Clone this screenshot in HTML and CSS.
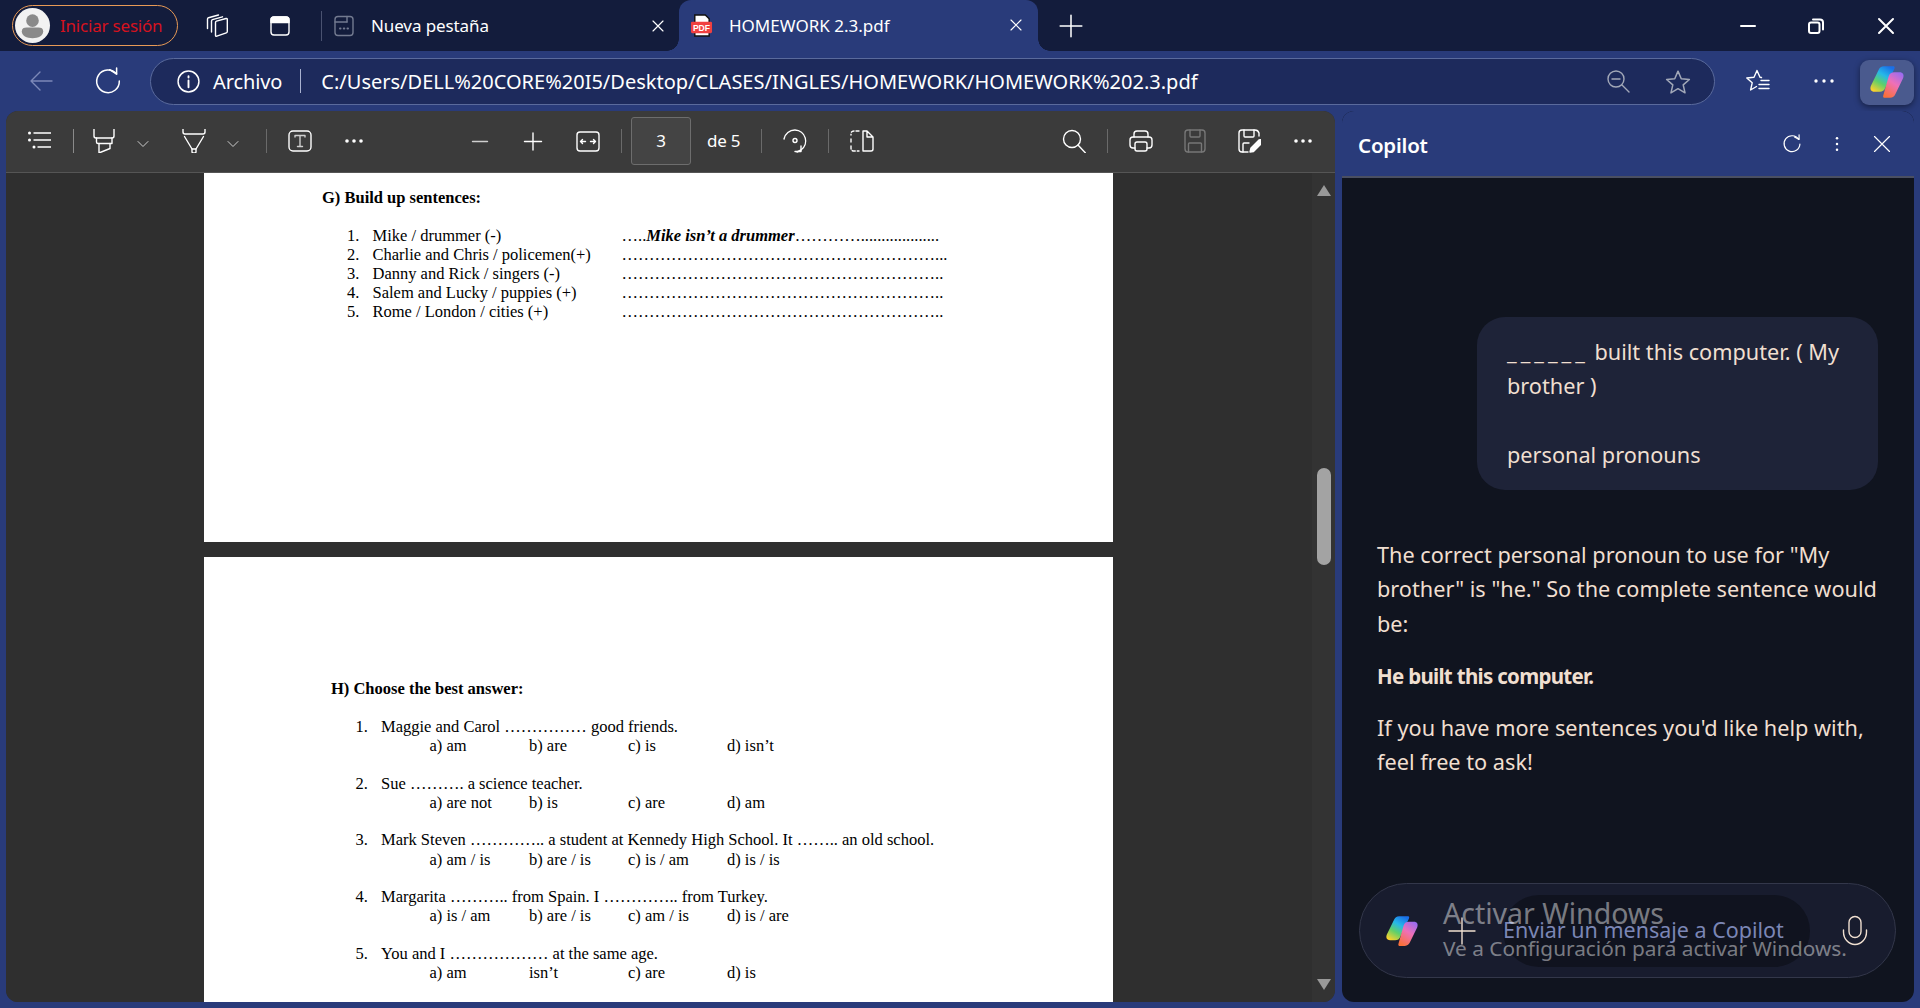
FILE: index.html
```html
<!DOCTYPE html>
<html lang="es">
<head>
<meta charset="utf-8">
<title>HOMEWORK 2.3.pdf</title>
<link rel="stylesheet" href="styles.css">
</head>
<body>
<svg class="defs" width="0" height="0" aria-hidden="true">
  <defs>
    <linearGradient id="cpA" x1="0.75" y1="0" x2="0.2" y2="1">
      <stop offset="0" stop-color="#1a6fe8"/><stop offset="0.35" stop-color="#26b8e8"/><stop offset="0.65" stop-color="#5fd06a"/><stop offset="1" stop-color="#fbd12c"/>
    </linearGradient>
    <linearGradient id="cpB" x1="0.8" y1="0" x2="0.25" y2="1">
      <stop offset="0" stop-color="#9a6cf0"/><stop offset="0.45" stop-color="#ee70b8"/><stop offset="1" stop-color="#f9703a"/>
    </linearGradient>
  </defs>
</svg>
<header class="tabbar">
  <div class="profile">
    <span class="avatar"><svg viewBox="0 0 36 36"><circle cx="18" cy="13" r="6.500" fill="#8a8a8a"/><path d="M7 24c0-3 2-4 5-4h12c3 0 5 1 5 4 0 5-5 7-11 7S7 29 7 24z" fill="#8a8a8a"/></svg></span>
    <span class="profile-label">Iniciar sesión</span>
  </div>
  <span class="btn b-work"><svg class="ic" viewBox="0 0 24 24"><path d="M10.500 8.500q0-1 1-1.300l9.500-2.700q1.300-.3 1.300 1v12q0 1-1 1.300l-9.500 3.400q-1.300.4-1.300-1z"/><path d="M6.500 18V7q0-1 1-1.300L17.500 2.800"/><path d="M2.500 14.500V5q0-1 1-1.300L13.500 1"/></svg></span>
  <span class="btn b-acts"><svg class="ic" viewBox="0 0 24 24"><rect x="3" y="3" width="18" height="18" rx="3"/><path d="M3 8.500h18V6a3 3 0 0 0-3-3H6a3 3 0 0 0-3 3z" fill="currentColor"/></svg></span>
  <span class="tab-sep"></span>
  <div class="tab tab-idle">
    <svg class="ic tab-ic dim" viewBox="0 0 24 24"><rect x="3" y="2.500" width="18" height="19" rx="3"/><path d="M3 8h12"/><path d="M15 2.500V8"/><path d="M8 14.500h.5M11.800 14.500h.5M15.500 14.500h.5" stroke-width="2"/></svg>
    <span class="tab-title">Nueva pestaña</span>
    <svg class="ic tab-x" viewBox="0 0 24 24"><path d="M6 6l12 12M18 6L6 18"/></svg>
  </div>
  <div class="tab tab-active">
    <svg class="tab-pdf" viewBox="0 0 24 24"><path d="M5 1h11l4 4v18H5z" fill="#fff" stroke="#111" stroke-width="1.500"/><rect x="1" y="8" width="22" height="12" rx="1.500" fill="#f04040"/><text x="12" y="17.500" class="pdf-mark">PDF</text></svg>
    <span class="tab-title">HOMEWORK 2.3.pdf</span>
    <svg class="ic tab-x" viewBox="0 0 24 24"><path d="M6 6l12 12M18 6L6 18"/></svg>
  </div>
  <span class="btn b-new"><svg class="ic big" viewBox="0 0 24 24"><path d="M12 2v20M2 12h20"/></svg></span>
  <div class="win">
    <span class="win-btn"><svg class="ic" viewBox="0 0 24 24"><path d="M5 12h14" stroke-width="2"/></svg></span>
    <span class="win-btn b-restore"><svg class="ic" viewBox="0 0 24 24"><rect x="5" y="8.500" width="10.500" height="10.500" rx="2" stroke-width="2"/><path d="M9 5.500h7a3 3 0 0 1 3 3v7" stroke-width="2"/></svg></span>
    <span class="win-btn"><svg class="ic" viewBox="0 0 24 24"><path d="M5 5l14 14M19 5L5 19" stroke-width="2"/></svg></span>
  </div>
</header>

<nav class="addr-row">
  <span class="btn b-back"><svg class="ic big faded" viewBox="0 0 26 26"><path d="M24 13H3M12 4l-9 9 9 9"/></svg></span>
  <span class="btn b-reload"><svg class="ic reload" viewBox="0 0 26 26"><path d="M21 6.500A10.500 10.500 0 1 0 23.500 13"/><path d="M14.500 2.500l6.500 4V1"/></svg></span>
  <div class="omnibox">
    <svg class="ic info" viewBox="0 0 24 24"><circle cx="12" cy="12" r="10"/><path d="M12 11v6.500M12 7v1.200" stroke-width="1.800"/></svg>
    <span class="archivo">Archivo</span>
    <span class="omni-sep"></span>
    <span class="url">C:/Users/DELL%20CORE%20I5/Desktop/CLASES/INGLES/HOMEWORK/HOMEWORK%202.3.pdf</span>
    <svg class="ic omni-zoom" viewBox="0 0 24 24"><circle cx="10" cy="10" r="8"/><path d="M6 10h8M16 16l7 7"/></svg>
    <svg class="ic omni-star" viewBox="0 0 24 24"><path d="M12 2l3 7 7.500.700-5.700 5 1.700 7.300L12 18.200 5.500 22l1.700-7.300-5.700-5L9 9z"/></svg>
  </div>
  <span class="btn b-fav"><svg class="ic" viewBox="0 0 24 24"><path d="M15.500 8.500L14 8.200 11 1.500 8 8.200.8 9l5.400 4.800L4.600 21l5.900-3.500"/><path d="M15 11.500h8M13 15.500h10M13 19.500h10"/></svg></span>
  <span class="btn b-more"><svg class="ic" viewBox="0 0 24 24"><circle cx="4" cy="12" r="1.700" class="dot"/><circle cx="12" cy="12" r="1.700" class="dot"/><circle cx="20" cy="12" r="1.700" class="dot"/></svg></span>
  <span class="copilot-btn"><svg class="logo logo-lg" viewBox="0 0 24 24"><path d="M16.500 1.500H10c-1.800 0-3 1-3.700 2.700L1.300 14.500c-1 2.500.3 4 2.200 4h3.700c1.800 0 3-.8 3.600-2.500L17 3c.3-1-.2-1.500-.5-1.500z" fill="url(#cpA)"/><path d="M10 22.500H14c1.800 0 3-1 3.700-2.700l5-10.300c1-2.500-.3-4-2.200-4h-3.700c-1.800 0-3 .8-3.600 2.500L9.500 21c-.3 1 .2 1.500.5 1.500z" fill="url(#cpB)"/></svg></span>
</nav>

<main class="workspace">
  <section class="viewer">
    <div class="toolbar">
      <span class="tool g17"><svg class="ic" viewBox="0 0 24 24"><path d="M7 4h17M7 11h17M11 18h13"/><circle cx="2.500" cy="4" r="1.500" class="dot"/><circle cx="2.500" cy="11" r="1.500" class="dot"/><circle cx="7" cy="18" r="1.500" class="dot"/></svg></span>
      <span class="tsep g18"></span>
      <span class="tool g14"><svg class="ic" viewBox="0 0 24 24"><path d="M2 0v7q0 2 2 2h16q2 0 2-2V0"/><path d="M4.500 9v4q0 1.500 1.500 1.500h14V9"/><path d="M7 14.500V24l11-4.500v-5"/></svg></span>
      <span class="chev g15"><svg class="ic" viewBox="0 0 16 16"><path d="M3 5.500l5 5 5-5"/></svg></span>
      <span class="tool g27"><svg class="ic" viewBox="0 0 24 24"><path d="M1 0v3q0 2 2 2h18q2 0 2-2V0"/><path d="M2.500 7.500L10 20h4l7.500-12.500"/><path d="M10 20v3q0 1 2 1t2-1v-3"/></svg></span>
      <span class="chev g15"><svg class="ic" viewBox="0 0 16 16"><path d="M3 5.500l5 5 5-5"/></svg></span>
      <span class="tsep dim-sep g25"></span>
      <span class="tool g17"><svg class="ic" viewBox="0 0 24 24"><rect x="1" y="2" width="22" height="20" rx="4"/><path d="M7 8V6.500h10V8M12 6.500v11M9.500 17.500h5" class="grey"/></svg></span>
      <span class="tool g22"><svg class="ic" viewBox="0 0 24 24"><circle cx="5" cy="12" r="1.800" class="dot"/><circle cx="12" cy="12" r="1.800" class="dot"/><circle cx="19" cy="12" r="1.800" class="dot"/></svg></span>
      <span class="tool g94"><svg class="ic" viewBox="0 0 24 24"><path d="M4.500 12.500h15" class="grey"/></svg></span>
      <span class="tool g21"><svg class="ic" viewBox="0 0 24 24"><path d="M12 4v17M3.500 12.500h17"/></svg></span>
      <span class="tool g23"><svg class="ic" viewBox="0 0 24 24"><rect x="1" y="3" width="22" height="19" rx="3"/><path d="M4.500 12.500h5M4.500 12.500l2-2M4.500 12.500l2 2M19.500 12.500h-5M19.500 12.500l-2-2M19.500 12.500l-2 2"/></svg></span>
      <span class="tsep dim-sep g17"></span>
      <span class="pagebox g9">3</span>
      <span class="of g16">de 5</span>
      <span class="tsep dim-sep g20"></span>
      <span class="tool g17"><svg class="ic" viewBox="0 0 24 24"><path d="M1 10A11 11 0 0 1 12 1a11 11 0 0 1 6 20l-4 2"/><path d="M18 17v5.500h-6"/><circle cx="12" cy="11.500" r="2"/></svg></span>
      <span class="tsep dim-sep g17"></span>
      <span class="tool g17"><svg class="ic" viewBox="0 0 24 24"><path d="M13 2h4l6 6v12q0 2-2 2h-8zM17 2v6h6"/><path d="M9 2H4q-3 0-3 3v1M1 10v3M1 17v2q0 3 3 3h5" stroke-dasharray="3 2"/></svg></span>
      <span class="tool g180"><svg class="ic" viewBox="0 0 24 24"><circle cx="10" cy="10" r="8.500"/><path d="M16 16l7.500 8"/></svg></span>
      <span class="tsep dim-sep g17"></span>
      <span class="tool g17"><svg class="ic" viewBox="0 0 24 24"><path d="M5 8V5q0-3 3-3h8q3 0 3 3v3"/><path d="M6 19H4q-3 0-3-3v-5q0-3 3-3h16q3 0 3 3v5q0 3-3 3h-2"/><rect x="6" y="13" width="12" height="9" rx="2"/></svg></span>
      <span class="tool g22 off"><svg class="ic" viewBox="0 0 24 24"><rect x="2" y="1" width="20" height="22" rx="3"/><path d="M7 1v6q0 1 1 1h8q1 0 1-1V1M5.500 23v-8q0-1 1-1h11q1 0 1 1v8"/></svg></span>
      <span class="tool g22"><svg class="ic" viewBox="0 0 24 24"><path d="M11 23H5q-3 0-3-3V4q0-3 3-3h13q3 0 4 3v3"/><path d="M7 1v6q0 1 1 1h8q1 0 1-1V1M6 23v-8q0-1 1-1h5"/><path d="M13 23l1-4 8-8q2-1 3 .5t-.5 3l-8 8z" fill="currentColor"/></svg></span>
      <span class="tool g22"><svg class="ic" viewBox="0 0 24 24"><circle cx="5" cy="12" r="1.800" class="dot"/><circle cx="12" cy="12" r="1.800" class="dot"/><circle cx="19" cy="12" r="1.800" class="dot"/></svg></span>
    </div>
    <div class="canvas">
      <div class="doc">
        <article class="sheet sheet-g">
          <h2 class="sheet-h">G) Build up sentences:</h2>
          <ol class="build">
            <li><span class="n">1.</span><span class="q">Mike / drummer (-)</span><span>…..<b><i>Mike isn’t a drummer</i></b>…………...................</span></li>
            <li><span class="n">2.</span><span class="q">Charlie and Chris / policemen(+)</span><span>…………………………………………………...</span></li>
            <li><span class="n">3.</span><span class="q">Danny and Rick / singers (-)</span><span>…………………………………………………..</span></li>
            <li><span class="n">4.</span><span class="q">Salem and Lucky / puppies (+)</span><span>…………………………………………………..</span></li>
            <li><span class="n">5.</span><span class="q">Rome / London / cities (+)</span><span>…………………………………………………..</span></li>
          </ol>
        </article>
        <article class="sheet sheet-h-page">
          <h2 class="sheet-h">H) Choose the best answer:</h2>
          <ol class="choose">
            <li><p><span class="n">1.</span>Maggie and Carol …………… good friends.</p><div class="opts"><span>a) am</span><span>b) are</span><span>c) is</span><span>d) isn’t</span></div></li>
            <li><p><span class="n">2.</span>Sue ………. a science teacher.</p><div class="opts"><span>a) are not</span><span>b) is</span><span>c) are</span><span>d) am</span></div></li>
            <li><p><span class="n">3.</span>Mark Steven ………….. a student at Kennedy High School. It …….. an old school.</p><div class="opts"><span>a) am / is</span><span>b) are / is</span><span>c) is / am</span><span>d) is / is</span></div></li>
            <li><p><span class="n">4.</span>Margarita ……….. from Spain. I ………….. from Turkey.</p><div class="opts"><span>a) is / am</span><span>b) are / is</span><span>c) am / is</span><span>d) is / are</span></div></li>
            <li><p><span class="n">5.</span>You and I ……………… at the same age.</p><div class="opts"><span>a) am</span><span>isn’t</span><span>c) are</span><span>d) is</span></div></li>
          </ol>
        </article>
      </div>
      <div class="scroll">
        <span class="arrow up"></span>
        <span class="thumb"></span>
        <span class="arrow down"></span>
      </div>
    </div>
  </section>

  <aside class="copilot">
    <div class="cp-head">
      <span class="cp-title">Copilot</span>
      <span class="cp-btn"><svg class="ic" viewBox="0 0 24 24"><path d="M20 6.500A9.500 9.500 0 1 0 21.500 12"/><path d="M15 3.500l5.500 3V1"/></svg></span>
      <span class="cp-btn"><svg class="ic" viewBox="0 0 24 24"><circle cx="12" cy="5" r="1.500" class="dot"/><circle cx="12" cy="12" r="1.500" class="dot"/><circle cx="12" cy="19" r="1.500" class="dot"/></svg></span>
      <span class="cp-btn"><svg class="ic" viewBox="0 0 24 24"><path d="M3 3l18 18M21 3L3 21"/></svg></span>
    </div>
    <div class="cp-body">
      <div class="bubble"><span class="blank">______</span> built this computer. ( My brother )<br><br>personal pronouns</div>
      <div class="answer">
        <p>The correct personal pronoun to use for "My brother" is "he." So the complete sentence would be:</p>
        <p><strong>He built this computer.</strong></p>
        <p>If you have more sentences you'd like help with, feel free to ask!</p>
      </div>
      <div class="composer">
        <svg class="logo logo-sm" viewBox="0 0 24 24"><path d="M16.500 1.500H10c-1.800 0-3 1-3.700 2.700L1.300 14.500c-1 2.500.3 4 2.200 4h3.700c1.800 0 3-.8 3.600-2.500L17 3c.3-1-.2-1.500-.5-1.500z" fill="url(#cpA)"/><path d="M10 22.500H14c1.800 0 3-1 3.700-2.700l5-10.300c1-2.500-.3-4-2.200-4h-3.700c-1.800 0-3 .8-3.600 2.500L9.500 21c-.3 1 .2 1.500.5 1.500z" fill="url(#cpB)"/></svg>
        <svg class="ic cp-plus" viewBox="0 0 28 28"><path d="M14 1v26M1 14h26"/></svg>
        <span class="placeholder">Enviar un mensaje a Copilot</span>
        <svg class="ic cp-mic" viewBox="0 0 28 32"><rect x="8" y="1.500" width="12" height="21" rx="6"/><path d="M2.500 15v2a11.500 12.500 0 0 0 23 0v-2"/></svg>
      </div>
    </div>
  </aside>
</main>

<div class="watermark">
  <div class="wm-title">Activar Windows</div>
  <div class="wm-sub">Ve a Configuración para activar Windows.</div>
</div>
</body>
</html>
```

FILE: styles.css
```css
* { box-sizing: border-box; }
html, body { margin: 0; padding: 0; }
body {
  width: 1920px;
  height: 1008px;
  overflow: hidden;
  position: relative;
  background: #293b7a;
  color: #fff;
  font-family: "Noto Sans", "Open Sans", sans-serif;
  display: flex;
  flex-direction: column;
}
.defs { position: absolute; }
.ic { display: block; width: 24px; height: 24px; fill: none; stroke: currentColor; stroke-width: 1.400; stroke-linecap: round; stroke-linejoin: round; }
.ic.big { width: 26px; height: 26px; }
.ic.reload { width: 28px; height: 28px; }
.dot { fill: currentColor; stroke: none; }
.btn { display: flex; align-items: center; justify-content: center; width: 32px; height: 32px; flex: none; }

/* tab strip */
.tabbar { height: 51px; flex: none; display: flex; align-items: center; background: #131c3c; padding-left: 12px; }
.profile { width: 166px; height: 41px; display: flex; align-items: center; border: 1.500px solid #e89a56; border-radius: 21px; padding-left: 2px; flex: none; }
.avatar { width: 35px; height: 35px; border-radius: 50%; background: #f2f2f2; flex: none; display: block; }
.avatar svg { display: block; width: 35px; height: 35px; }
.profile-label { margin-left: 10px; color: #d5121e; font-size: 17px; letter-spacing: -.2px; white-space: nowrap; }
.b-work { margin-left: 23px; }
.b-acts { margin-left: 31px; }
.tab-sep { width: 1px; height: 30px; background: #4a5270; margin-left: 25px; flex: none; }
.tab { display: flex; align-items: center; flex: none; height: 51px; position: relative; }
.tab-idle { width: 357px; padding-left: 10px; }
.tab-active { width: 359px; padding-left: 11px; background: #293b7a; border-radius: 12px 12px 0 0; }
.tab-active::before, .tab-active::after { content: ""; position: absolute; bottom: 0; width: 12px; height: 12px; }
.tab-active::before { left: -12px; background: radial-gradient(circle at 0 0, #131c3c 11.500px, #293b7a 12px); }
.tab-active::after { right: -12px; background: radial-gradient(circle at 100% 0, #131c3c 11.500px, #293b7a 12px); }
.tab-ic { flex: none; }
.dim { color: #737a90; }
.tab-title { font-size: 17px; white-space: nowrap; }
.tab-idle .tab-title { margin-left: 15px; letter-spacing: -.1px; }
.tab-active .tab-title { margin-left: 16px; }
.tab-x { width: 20px; height: 20px; position: absolute; }
.tab-idle .tab-x { left: 326px; top: 16px; }
.tab-active .tab-x { left: 327px; top: 15px; }
.tab-pdf { width: 23px; height: 23px; flex: none; }
.pdf-mark { font: 700 9px "Liberation Sans", sans-serif; fill: #fff; text-anchor: middle; }
.b-new { margin-left: 17px; }
.win { margin-left: auto; display: flex; }
.win-btn { width: 69px; height: 51px; display: flex; align-items: center; justify-content: center; }
.b-restore .ic { margin-left: -2px; }

/* address row */
.addr-row { height: 60px; flex: none; display: flex; align-items: center; background: #293b7a; }
.b-back { margin-left: 25px; }
.faded { color: #7c88b8; }
.b-reload { margin-left: 35px; }
.omnibox { width: 1565px; height: 47px; margin-left: 26px; border: 1.500px solid #5a6a9c; border-radius: 24px; background: #1d2a5c; display: flex; align-items: center; position: relative; flex: none; padding-left: 25px; }
.info { width: 25px; height: 25px; flex: none; }
.archivo { margin-left: 12px; font-size: 20px; white-space: nowrap; letter-spacing: -.1px; }
.omni-sep { width: 1px; height: 24px; background: #a9b2d0; margin-left: 18px; flex: none; }
.url { margin-left: 20px; font-size: 20px; white-space: nowrap; }
.omni-zoom, .omni-star { position: absolute; color: #a2a8b8; top: 10px; }
.omni-zoom { left: 1455px; }
.omni-star { left: 1514px; width: 26px; height: 26px; }
.b-fav { margin-left: 27px; }
.b-more { margin-left: 34px; }
.copilot-btn { width: 54px; height: 45px; margin-left: 20px; border-radius: 9px; background: #4a5a8e; box-shadow: 0 2px 6px rgba(0,0,0,.45); display: flex; align-items: center; justify-content: center; flex: none; margin-top: 2px; }
.logo { display: block; }
.logo-lg { width: 36px; height: 36px; }
.logo-sm { width: 34px; height: 34px; flex: none; }

/* workspace */
.workspace { flex: 1; display: flex; padding: 0 6px 6px 6px; gap: 7px; min-height: 0; }
.viewer { width: 1329px; flex: none; border-radius: 12px; overflow: hidden; display: flex; flex-direction: column; background: #2f2f2f; }
.toolbar { height: 62px; flex: none; background: #3b3b3b; border-bottom: 1px solid #555; padding-bottom: 2px; display: flex; align-items: center; color: #fff; }
.tool { width: 32px; height: 32px; flex: none; display: flex; align-items: center; justify-content: center; }
.tool.off { color: #777; }
.chev { width: 16px; height: 16px; flex: none; margin-top: 6px; color: #ccc; }
.chev .ic { width: 16px; height: 16px; stroke-width: 1; }
.tsep { width: 1px; height: 24px; background: #8a8a8a; flex: none; }
.dim-sep { background: #6a6a6a; }
.grey { stroke: #cfcfcf; }
.pagebox { width: 60px; height: 48px; border: 1px solid #6d6d6d; border-radius: 3px; background: #444; display: flex; align-items: center; justify-content: center; font-size: 17px; flex: none; }
.of { width: 34px; font-size: 17px; white-space: nowrap; flex: none; letter-spacing: -.2px; }
.g9 { margin-left: 9px; } .g14 { margin-left: 14px; } .g15 { margin-left: 15px; } .g16 { margin-left: 16px; }
.g17 { margin-left: 17px; } .g18 { margin-left: 18px; } .g20 { margin-left: 20px; } .g21 { margin-left: 21px; }
.g22 { margin-left: 22px; } .g23 { margin-left: 23px; } .g25 { margin-left: 25px; } .g27 { margin-left: 27px; }
.g94 { margin-left: 94px; } .g180 { margin-left: 180px; }

/* pdf */
.canvas { flex: 1; display: flex; min-height: 0; }
.doc { width: 1306px; flex: none; overflow: hidden; padding-left: 198px; background: #2f2f2f; }
.sheet { width: 909px; background: #fff; color: #000; font-family: "Liberation Serif", "Times New Roman", serif; font-size: 16.500px; line-height: 19.200px; }
.sheet-g { height: 369px; padding: 15px 0 0 118px; margin-bottom: 15px; }
.sheet-h-page { height: 460px; padding: 122px 0 0 127px; }
.sheet-h { margin: 0; font-size: 16.500px; font-weight: 700; line-height: 20px; }
.build, .choose { list-style: none; margin: 0; padding: 0; }
.build { margin-top: 18px; margin-left: 25px; }
.build li { display: flex; white-space: nowrap; height: 19.100px; }
.n { display: inline-block; width: 25.500px; flex: none; }
.q { width: 249px; flex: none; }
.choose { margin-top: 18px; margin-left: 24.500px; }
.choose li { height: 56.700px; white-space: nowrap; }
.choose p { margin: 0; }
.opts { display: grid; grid-template-columns: 99.500px 99px 99px auto; margin-left: 74px; }

.scroll { flex: 1; background: #333; display: flex; flex-direction: column; align-items: center; position: relative; }
.arrow { width: 0; height: 0; border-left: 7px solid transparent; border-right: 7px solid transparent; flex: none; }
.arrow.up { border-bottom: 11px solid #999; margin-top: 12px; }
.arrow.down { border-top: 11px solid #999; margin-top: auto; margin-bottom: 12px; }
.thumb { width: 14px; height: 97px; border-radius: 7px; background: #a3a3a3; margin-top: 272px; flex: none; }

/* copilot */
.copilot { width: 572px; flex: none; border-radius: 12px; overflow: hidden; display: flex; flex-direction: column; background: #10141f; }
.cp-head { height: 67px; flex: none; background: #293b7a; border-bottom: 2px solid #4a4f62; display: flex; align-items: center; padding-left: 16px; }
.cp-title { font-size: 20.500px; font-weight: 600; margin-right: auto; margin-top: 2px; letter-spacing: -.2px; }
.cp-btn { width: 45px; display: flex; justify-content: center; flex: none; }
.cp-btn:last-child { margin-right: 10px; }
.cp-btn .ic { width: 20px; height: 20px; }
.cp-body { flex: 1; display: flex; flex-direction: column; position: relative; color: #f0dfd0; font-size: 22px; line-height: 34.400px; }
.bubble { margin: 139px 36px 0 135px; width: 401px; height: 173px; padding: 17.500px 28px 0 30px; border-radius: 28px; background: #1e2338; font-size: 21.700px; flex: none; }
.blank { letter-spacing: 4px; }
.answer { margin: 48px 26px 0 35px; font-size: 21.700px; }
.answer p { margin: 0 0 17.500px; }
.answer strong { font-weight: 700; font-size: 20.500px; letter-spacing: -.7px; }
.composer { position: absolute; left: 17px; top: 705px; width: 537px; height: 95px; border: 1.500px solid #33374a; border-radius: 48px; background: #181c2e; display: flex; align-items: center; padding-left: 25px; }
.cp-plus { width: 28px; height: 28px; margin-left: 29px; color: #f0dfd0; flex: none; }
.placeholder { margin-left: 27px; height: 72px; line-height: 70px; width: 307px; border-radius: 36px; background: #10131f; color: #7b86b5; font-size: 21.500px; white-space: nowrap; flex: none; }
.cp-mic { width: 28px; height: 32px; margin-left: 31px; color: #f0dfd0; flex: none; }

.watermark { position: absolute; left: 1443px; top: 894px; color: rgba(255,255,255,.45); pointer-events: none; white-space: nowrap; }
.wm-title { font-size: 28.500px; line-height: 38px; }
.wm-sub { font-size: 20.800px; line-height: 28px; margin-top: 2px; }
```
